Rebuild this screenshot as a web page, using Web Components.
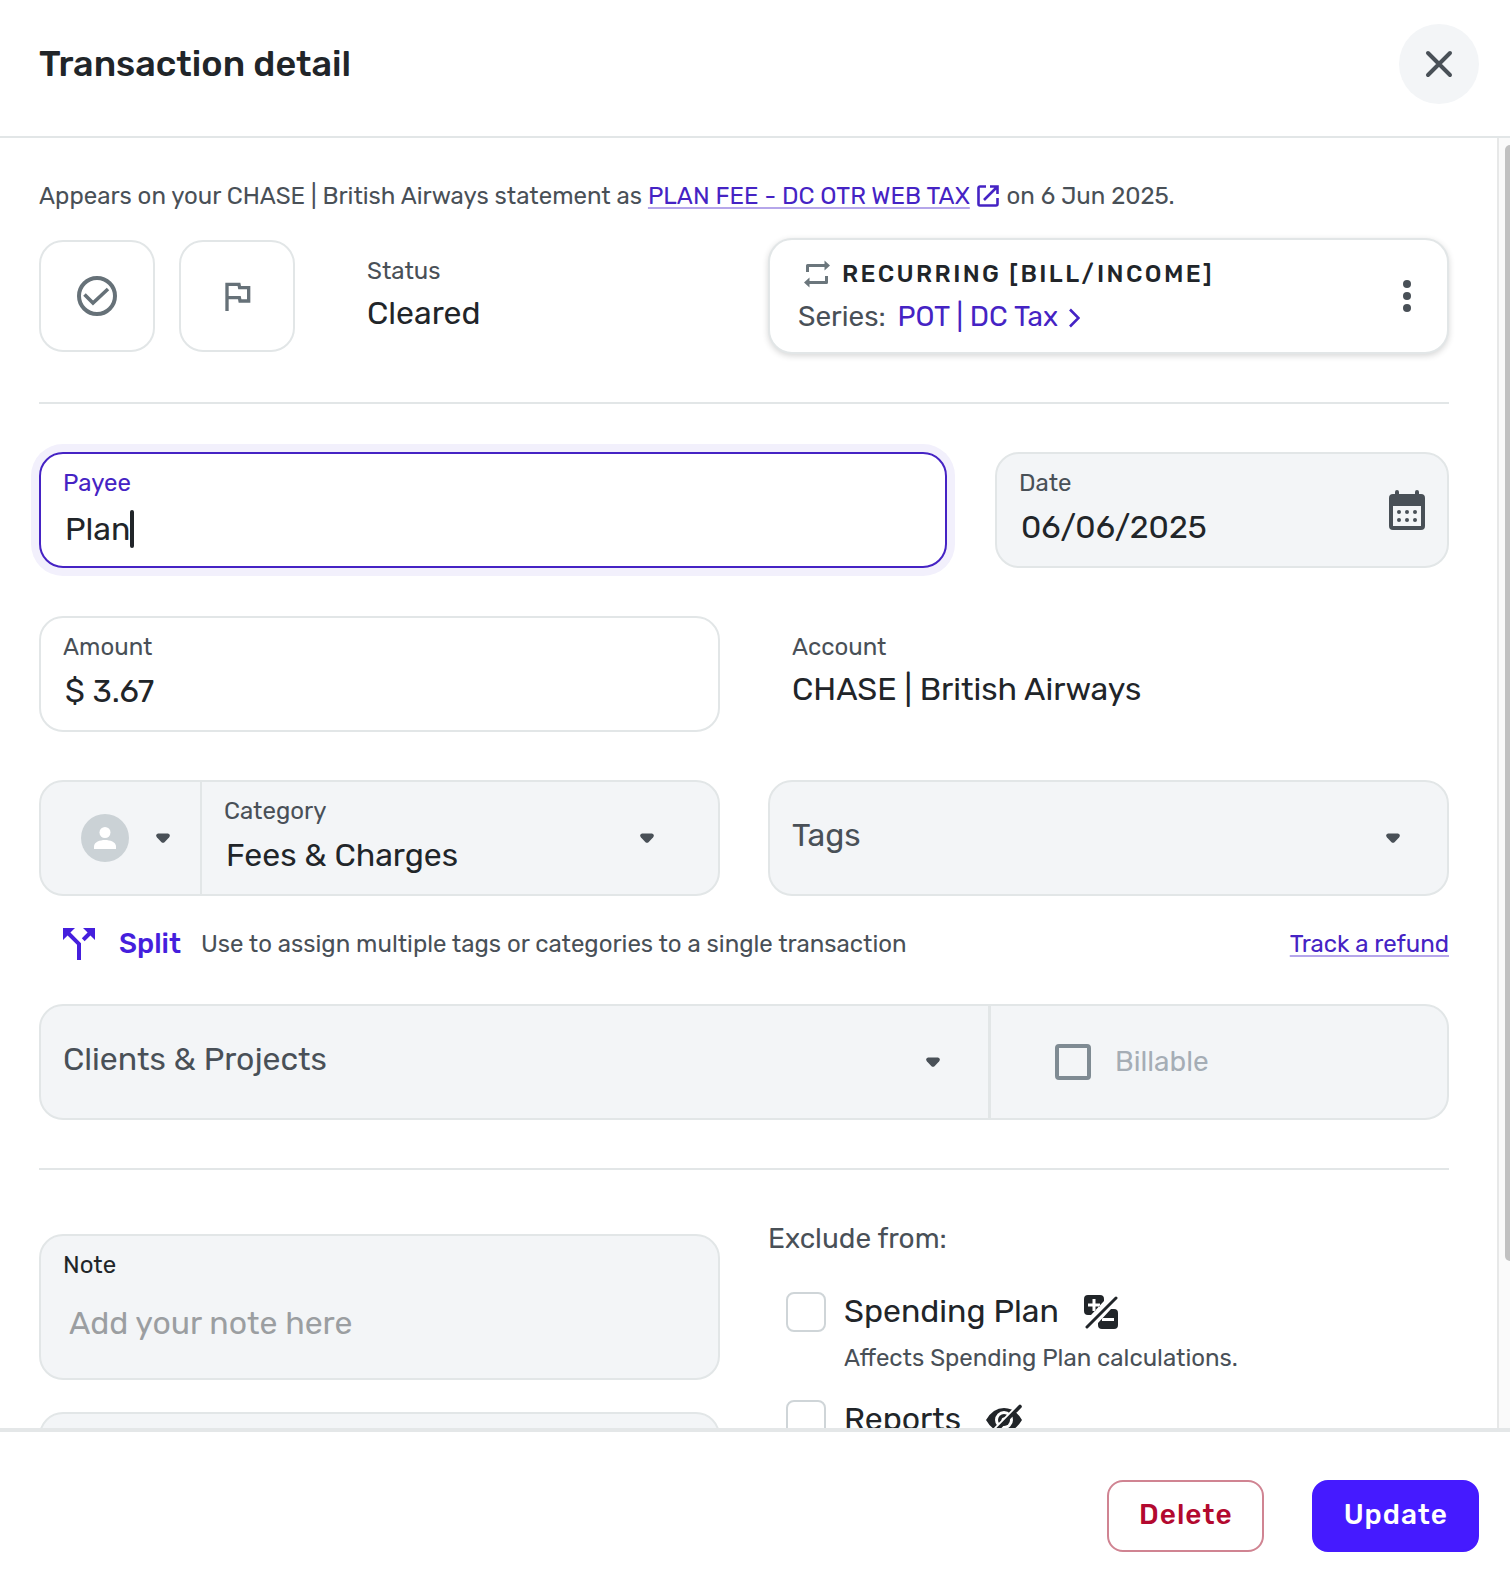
<!DOCTYPE html>
<html lang="en">
<head>
<meta charset="utf-8">
<title>Transaction detail</title>
<style>
  html, body { height: 100%; margin: 0; }
  body {
    --ink: #212529; --muted: #495057; --faint: #a5adb5; --line: #e2e6e7; --fill: #f3f5f7;
    --accent: #4523c4; --accent-strong: #451aff; --danger: #b3092f; --icon: #495057;
    font-family: Rubik, Roboto, "Liberation Sans", sans-serif;
    font-size: 24px; line-height: 32px; color: var(--ink); background: #fff;
  }
</style>
</head>
<body>
<tx-dialog heading="Transaction detail">
  <tx-statement></tx-statement>
  <tx-status-row></tx-status-row>
  <tx-rule></tx-rule>
  <tx-row columns="2fr 1fr">
    <tx-field label="Payee" value="Plan" active></tx-field>
    <tx-field label="Date" value="06/06/2025" filled icon="calendar"></tx-field>
  </tx-row>
  <tx-row columns="1fr 1fr">
    <tx-field label="Amount" value="$ 3.67"></tx-field>
    <tx-readout label="Account" inset>CHASE | British Airways</tx-readout>
  </tx-row>
  <tx-row columns="1fr 1fr">
    <tx-category></tx-category>
    <tx-select label="Tags"></tx-select>
  </tx-row>
  <tx-split-row></tx-split-row>
  <tx-clients></tx-clients>
  <tx-rule></tx-rule>
  <tx-extras></tx-extras>
  <tx-button slot="actions" kind="danger">Delete</tx-button>
  <tx-button slot="actions" kind="primary">Update</tx-button>
</tx-dialog>

<script>
const base = `
  *, *::before, *::after { box-sizing: border-box; }
  :host { display: block; box-sizing: border-box; min-width: 0; }
  button, input, select, textarea { font: inherit; color: inherit; margin: 0; padding: 0; border: 0; background: none; outline: 0; border-radius: 0; }
  button { cursor: pointer; }
  a { color: var(--accent); text-decoration: none; }
  .box { border: 2px solid var(--line); border-radius: 24px; background: var(--fill); }
  .value { font-size: 32px; line-height: 40px; }
`;
function define(name, css, render) {
  customElements.define(name, class extends HTMLElement {
    connectedCallback() {
      if (this.shadowRoot) return;
      const root = this.attachShadow({ mode: 'open' });
      const t = document.createElement('template');
      t.innerHTML = `<style>${base}${css}</style>${render(this)}`;
      root.appendChild(t.content.cloneNode(true));
    }
  });
}
const attr = (el, n) => el.getAttribute(n) || '';

const icons = {
  close: [28, 28, '<path d="M3 3 25 25M25 3 3 25" fill="none" stroke="currentColor" stroke-width="4" stroke-linecap="round"/>'],
  check: [40, 40, '<circle cx="20" cy="20" r="18" fill="none" stroke="currentColor" stroke-width="4"/><path d="M7.500 18.500 16 27 31 13" fill="none" stroke="currentColor" stroke-width="3.600"/>'],
  flag: [40, 40, '<path transform="scale(1.667)" fill="currentColor" d="M12.36 6l.08.39.32 1.61H18v6h-3.36l-.32-1.61-.08-.39H7V6h5.36M14 4H5v17h2v-7h5.6l.4 2h7V6h-5.6L14 4z"/>'],
  open: [22, 22, '<path d="M9 1.500H3A1.500 1.500 0 0 0 1.500 3v16A1.500 1.500 0 0 0 3 20.500h16a1.500 1.500 0 0 0 1.500-1.500v-6M13 1.500h7.500V9M20 2 7 15" fill="none" stroke="currentColor" stroke-width="2.600"/>'],
  repeat: [28, 28, '<path d="M4.500 12V5.500H22M23.500 16v6.500H6" fill="none" stroke="currentColor" stroke-width="3" stroke-linejoin="round"/><path d="M21.500.5 27 5.500 21.500 10.500zM6.500 17.500 1 22.500 6.500 27.500z" fill="currentColor"/>'],
  dots: [8, 32, '<g fill="currentColor"><circle cx="4" cy="4" r="4"/><circle cx="4" cy="16" r="4"/><circle cx="4" cy="28" r="4"/></g>'],
  chevron: [12, 20, '<path d="M2 1.500 10.500 10 2 18.500" fill="none" stroke="currentColor" stroke-width="2.600"/>'],
  calendar: [36, 40, '<path fill="currentColor" fill-rule="evenodd" d="M8 0a2 2 0 0 1 2 2v2h16V2a2 2 0 0 1 4 0v2h2a4 4 0 0 1 4 4v28a4 4 0 0 1-4 4H4a4 4 0 0 1-4-4V8a4 4 0 0 1 4-4h2V2a2 2 0 0 1 2-2zM4 16v20h28V16z"/><g fill="currentColor"><circle cx="10" cy="22" r="2"/><circle cx="18" cy="22" r="2"/><circle cx="26" cy="22" r="2"/><circle cx="10" cy="30" r="2"/><circle cx="18" cy="30" r="2"/><circle cx="26" cy="30" r="2"/></g>'],
  caret: [14, 10, '<path fill="currentColor" d="M2 .5H12Q15 1.500 13 4.500L8.500 9.200Q7 10.400 5.500 9.200L1 4.500Q-1 1.500 2 .5z"/>'],
  person: [48, 48, '<circle cx="24" cy="24" r="24" fill="#cbd2d6"/><circle cx="24" cy="18.500" r="5.500" fill="#fff"/><path fill="#fff" d="M13 35v-2.500c0-4.500 6-6.500 11-6.500s11 2 11 6.500V35z"/>'],
  split: [32, 32, '<path transform="scale(2) translate(-4 -4)" fill="currentColor" d="M14 4l2.290 2.290-2.880 2.880 1.420 1.420 2.880-2.880L20 10V4zm-4 0H4v6l2.290-2.290 4.710 4.700V20h2v-8.410l-5.290-5.300z"/>'],
  plan: [34, 36, '<path fill="currentColor" fill-rule="evenodd" d="M4 1h12q4 0 4 4v2L7 21H4q-4 0-4-4V5q0-4 4-4zM8.500 5v4.500H4v3h4.500V17h3v-4.500H16v-3h-4.500V5zM27 15h3q4 0 4 4v12q0 4-4 4H18q-4 0-4-4v-2zM18 24v3h12v-3z"/><path d="M3 33 32 4" stroke="currentColor" stroke-width="3" stroke-linecap="round"/>'],
  eye: [36, 32, '<path fill="currentColor" fill-rule="evenodd" d="M0 16Q7 4 18 4t18 12Q29 28 18 28T0 16zm9 0a9 9 0 0 0 18 0 9 9 0 0 0-18 0z"/><circle cx="18" cy="16" r="6" fill="currentColor"/><circle cx="18" cy="16" r="2.500" fill="#fff"/><path d="M5.500 28.500 32 1.500" stroke="#fff" stroke-width="3"/><path d="M7 30 34 2.500" stroke="currentColor" stroke-width="3.600" stroke-linecap="round"/>']
};
define('tx-icon', ':host{display:inline-flex;flex:none} svg{display:block}', el => {
  const [w, h, art] = icons[attr(el, 'name')];
  return `<svg width="${w}" height="${h}" viewBox="0 0 ${w} ${h}" aria-hidden="true">${art}</svg>`;
});

define('tx-dialog', `
  :host { display: flex; flex-direction: column; height: 100vh; }
  header { display: flex; align-items: center; justify-content: space-between; padding: 24px 31px 32px 39px; border-bottom: 2px solid var(--line); }
  h1 { margin: 0; font-size: 36px; line-height: 44px; font-weight: 500; }
  .close { width: 80px; height: 80px; border-radius: 50%; background: var(--fill); color: var(--icon); display: flex; align-items: center; justify-content: center; }
  .middle { flex: 1; min-height: 0; display: flex; }
  main { flex: 1; min-width: 0; overflow: hidden; padding: 40px 48px 0 39px; }
  .track { width: 13px; border-left: 2px solid #e7e8e8; background: #fafafa; padding: 7px 0 0 6px; }
  .thumb { height: 87%; background: #c1c1c1; border-radius: 8px 0 0 8px; }
  footer { display: flex; justify-content: flex-end; gap: 48px; padding: 48px 31px 26px; border-top: 4px solid #e4e7e8; }
`, el => `
  <header><h1>${attr(el, 'heading')}</h1><button class="close" aria-label="Close"><tx-icon name="close"></tx-icon></button></header>
  <div class="middle"><main><slot></slot></main><div class="track"><div class="thumb"></div></div></div>
  <footer><slot name="actions"></slot></footer>`);

define('tx-statement', `
  :host { color: var(--muted); }
  p { margin: 0; line-height: 36px; }
  .link { text-decoration: underline 2px #b5a6ea; text-underline-offset: 3px; text-decoration-skip-ink: none; }
  tx-icon { color: var(--accent); vertical-align: -3px; margin: 0 2px 0 1px; }
`, () => `<p>Appears on your CHASE | British Airways statement as <a class="link" href="#">PLAN FEE - DC OTR WEB TAX</a> <tx-icon name="open"></tx-icon> on 6 Jun 2025.</p>`);

define('tx-status-row', `
  :host { padding-top: 24px; }
  .grid { display: grid; grid-template-columns: 1fr 1fr; gap: 48px; align-items: center; }
  .left { display: flex; align-items: center; gap: 24px; }
  .toggle { width: 116px; height: 112px; border: 2px solid var(--line); border-radius: 24px; display: flex; align-items: center; justify-content: center; color: #667178; }
  tx-readout { margin-left: 48px; padding-top: 2px; }
`, () => `
  <div class="grid">
    <div class="left">
      <button class="toggle" aria-label="Reviewed"><tx-icon name="check"></tx-icon></button>
      <button class="toggle" aria-label="Flag"><tx-icon name="flag"></tx-icon></button>
      <tx-readout label="Status">Cleared</tx-readout>
    </div>
    <tx-recurring></tx-recurring>
  </div>`);

define('tx-readout', `
  :host([inset]) { padding: 15px 24px; }
  .label { color: var(--muted); line-height: 32px; }
  .value { line-height: 52px; }
`, el => `<div class="label">${attr(el, 'label')}</div><div class="value"><slot></slot></div>`);

define('tx-recurring', `
  .card { display: flex; align-items: center; justify-content: space-between; height: 116px; padding: 2px 36px 0 28px; border: 2px solid #e2e6e7; border-radius: 24px; background: #fff; box-shadow: 0 2px 6px rgba(0,0,0,.16); }
  h2 { display: flex; align-items: center; gap: 11px; margin: 0 0 0 5px; font-size: 24px; line-height: 40px; font-weight: 500; letter-spacing: 0.1em; }
  h2 tx-icon { color: #6b767c; }
  p { margin: 0; font-size: 28px; line-height: 46px; color: var(--muted); }
  a { margin-left: 5px; }
  a tx-icon { margin-left: 3px; vertical-align: -2px; }
  button { color: var(--icon); display: flex; margin-bottom: 2px; }
`, () => `
  <div class="card">
    <div>
      <h2><tx-icon name="repeat"></tx-icon>RECURRING [BILL/INCOME]</h2>
      <p>Series: <a href="#">POT | DC Tax <tx-icon name="chevron"></tx-icon></a></p>
    </div>
    <button aria-label="More options"><tx-icon name="dots"></tx-icon></button>
  </div>`);

define('tx-rule', `:host { padding: 48px 0; } hr { margin: 0; border: 0; height: 2px; background: var(--line); }`, () => '<hr>');

define('tx-row', `
  :host { display: grid; gap: 48px; }
  :host(:not(:first-of-type)) { margin-top: 48px; }
`, el => `<style>:host { grid-template-columns: ${attr(el, 'columns')}; }</style><slot></slot>`);

define('tx-field', `
  .box { height: 116px; padding: 13px 22px; display: flex; align-items: center; justify-content: space-between; background: #fff; }
  :host([filled]) .box { background: var(--fill); }
  :host([active]) .box { border-color: var(--accent); box-shadow: 0 0 0 8px #f2f0fc; }
  .body { flex: 1; min-width: 0; align-self: flex-start; }
  label { display: block; color: var(--muted); line-height: 32px; }
  :host([active]) label { color: var(--accent); }
  .entry { display: flex; align-items: center; padding: 8px 2px 0; }
  :host([active]) .entry { padding-top: 10px; }
  input { flex: 1; min-width: 0; height: 40px; }
  :host([active]) input { flex: none; field-sizing: content; }
  .caret { width: 4px; height: 38px; border-radius: 2px; background: var(--ink); }
  button { display: flex; }
  tx-icon { color: var(--icon); }
`, el => `
  <div class="box">
    <div class="body">
      <label for="i">${attr(el, 'label')}</label>
      <div class="entry"><input id="i" class="value" type="text" value="${attr(el, 'value')}">${el.hasAttribute('active') ? '<span class="caret"></span>' : ''}</div>
    </div>
    ${attr(el, 'icon') ? `<button aria-label="Open calendar"><tx-icon name="${attr(el, 'icon')}"></tx-icon></button>` : ''}
  </div>`);

const selectCss = `
  select { appearance: none; flex: 1; min-width: 0; font-size: 32px; line-height: 40px; color: var(--muted); }
  tx-icon { color: var(--icon); }
`;
define('tx-select', selectCss + `
  .box { height: 116px; padding: 0 47px 0 22px; display: flex; align-items: center; }
  select { height: 44px; margin-bottom: 6px; }
`, el => `<div class="box"><select aria-label="${attr(el, 'label')}"><option>${attr(el, 'label')}</option></select><tx-icon name="caret"></tx-icon></div>`);

define('tx-category', selectCss + `
  .box { height: 116px; display: flex; }
  .owner { width: 161px; padding-left: 40px; display: flex; align-items: center; gap: 27px; border-right: 2px solid var(--line); }
  .category { flex: 1; min-width: 0; padding: 13px 64px 13px 22px; display: flex; align-items: center; }
  .body { flex: 1; min-width: 0; align-self: flex-start; }
  label { display: block; color: var(--muted); line-height: 32px; }
  select { display: block; width: 100%; height: 40px; margin-top: 8px; padding-left: 2px; color: var(--ink); }
`, () => `
  <div class="box">
    <button class="owner" aria-label="Owner"><tx-icon name="person"></tx-icon><tx-icon name="caret"></tx-icon></button>
    <div class="category">
      <div class="body"><label for="c">Category</label><select id="c"><option>Fees &amp; Charges</option></select></div>
      <tx-icon name="caret"></tx-icon>
    </div>
  </div>`);

define('tx-split-row', `
  :host { display: flex; align-items: center; height: 108px; padding: 0 0 12px 24px; color: var(--muted); }
  button { display: flex; align-items: center; gap: 24px; color: #451fdd; font-size: 28px; line-height: 36px; font-weight: 500; }
  .hint { flex: 1; margin-left: 20px; }
  a { text-decoration: underline 2px #b5a6ea; text-underline-offset: 3px; text-decoration-skip-ink: none; }
`, () => `<button><tx-icon name="split"></tx-icon>Split</button><span class="hint">Use to assign multiple tags or categories to a single transaction</span><a href="#">Track a refund</a>`);

define('tx-clients', selectCss + `
  .box { height: 116px; display: grid; grid-template-columns: 950fr 456fr; }
  .clients { min-width: 0; display: flex; align-items: center; padding: 0 48px 0 22px; border-right: 3px solid var(--line); }
  select { height: 44px; margin-bottom: 6px; }
  .billable { display: flex; align-items: center; padding-left: 64px; gap: 24px; font-size: 28px; color: var(--faint); }
  input { appearance: none; width: 36px; height: 36px; border: 4px solid #7f8b93; border-radius: 4px; }
`, () => `
  <div class="box">
    <div class="clients"><select aria-label="Clients &amp; Projects"><option>Clients &amp; Projects</option></select><tx-icon name="caret"></tx-icon></div>
    <div class="billable"><input id="b" type="checkbox" disabled><label for="b">Billable</label></div>
  </div>`);

define('tx-extras', `
  :host { display: grid; grid-template-columns: 1fr 1fr; gap: 48px; }
  .notes { display: flex; flex-direction: column; gap: 32px; padding-top: 16px; }
  .note { height: 146px; padding: 13px 22px; }
  .note label { display: block; }
  textarea { display: block; width: 100%; height: 48px; margin-top: 20px; padding: 2px 6px; resize: none; overflow: hidden; }
  textarea::placeholder { color: #9b9ea1; opacity: 1; }
  fieldset { margin: 0; padding: 0; border: 0; min-width: 0; }
  legend { padding: 0; font-size: 28px; line-height: 42px; color: var(--muted); }
  tx-check { margin: 32px 0 0 18px; }
  tx-check + tx-check { margin-top: 24px; }
`, () => `
  <div class="notes">
    <div class="box note"><label for="n">Note</label><textarea id="n" class="value" placeholder="Add your note here"></textarea></div>
    <div class="box note"></div>
  </div>
  <fieldset>
    <legend>Exclude from:</legend>
    <tx-check icon="plan" label="Spending Plan">Affects Spending Plan calculations.</tx-check>
    <tx-check icon="eye" label="Reports"></tx-check>
  </fieldset>`);

define('tx-check', `
  .line { display: flex; align-items: center; height: 40px; }
  input { appearance: none; width: 40px; height: 40px; border: 2px solid #cfd5d8; border-radius: 8px; background: #fff; }
  label { margin: 0 25px 2px 18px; }
  .hint { padding: 10px 0 0 58px; height: 44px; line-height: 32px; color: var(--muted); }
`, el => `
  <div class="line"><input id="k" type="checkbox"><label for="k" class="value">${attr(el, 'label')}</label><tx-icon name="${attr(el, 'icon')}"></tx-icon></div>
  <div class="hint"><slot></slot></div>`);

define('tx-button', `
  button { height: 72px; padding: 0 29px 2px 30px; border: 2px solid var(--accent-strong); border-radius: 16px; font-size: 28px; line-height: 36px; font-weight: 500; letter-spacing: 1px; background: var(--accent-strong); color: #fff; }
  :host([kind=danger]) button { background: #fff; border-color: #d08492; color: var(--danger); }
`, () => '<button><slot></slot></button>');
</script>
</body>
</html>
